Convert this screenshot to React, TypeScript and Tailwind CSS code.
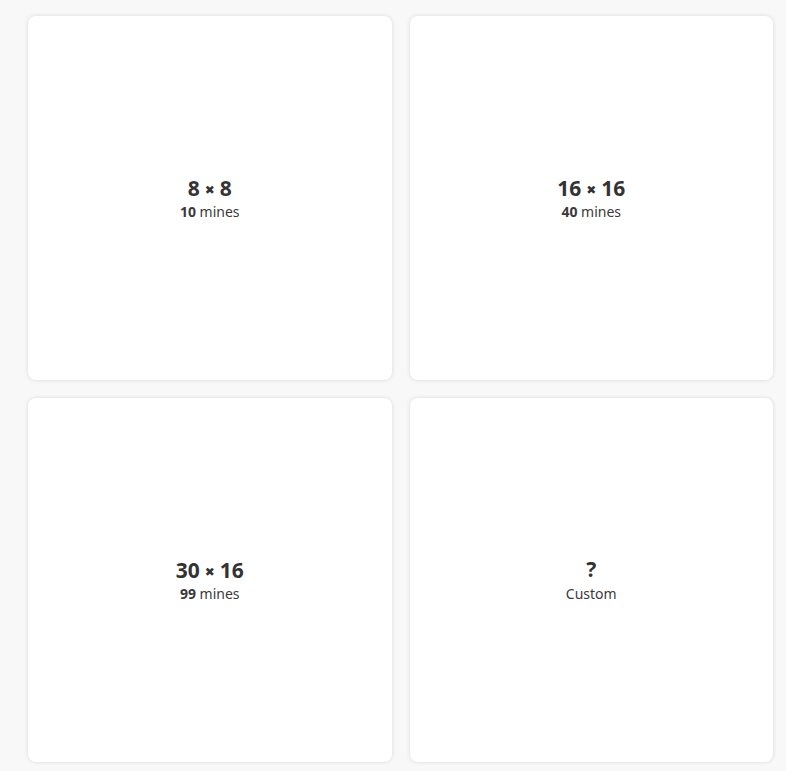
const presets = [
  { w: "8", h: "8", count: "10" },
  { w: "16", h: "16", count: "40" },
  { w: "30", h: "16", count: "99" },
];

function Card({ children }: { children: React.ReactNode }) {
  return (
    <button className="flex h-[364px] flex-col items-center justify-center rounded-lg bg-white text-[#333] shadow-[0_0_4px_rgba(0,0,0,0.13)]">
      {children}
    </button>
  );
}

function Times() {
  return (
    <span className="mx-[5px] inline-block align-[2px] font-['DejaVu_Sans',sans-serif] text-[12px] font-bold leading-none">
      ✖
    </span>
  );
}

export default function App() {
  return (
    <div
      className="min-h-[771px] bg-[#f8f8f8] pl-[28px] pt-[16px]"
      style={{ fontFamily: '"Noto Sans", "Open Sans", sans-serif' }}
    >
      <div className="grid w-[745px] grid-cols-2 gap-[18px]">
        {presets.map((p) => (
          <Card key={p.count}>
            <span className="text-[21px] font-bold leading-[24px]">
              {p.w}
              <Times />
              {p.h}
            </span>
            <span className="mt-[2px] text-[14px] leading-[19px] text-[#3a3a3a]">
              <b>{p.count}</b> mines
            </span>
          </Card>
        ))}
        <Card>
          <span className="mt-[1px] text-[21px] font-bold leading-[24px]">?</span>
          <span className="mt-[3px] text-[14px] leading-[20px] text-[#3a3a3a]">Custom</span>
        </Card>
      </div>
    </div>
  );
}
